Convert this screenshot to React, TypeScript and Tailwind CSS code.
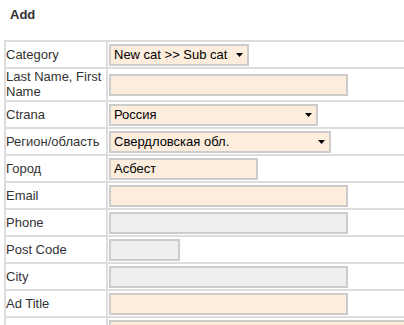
import React from "react";

const Arrow = () => (
  <svg width="7" height="4" viewBox="0 0 7 4" className="shrink-0">
    <path d="M0 0H7L3.5 4Z" fill="#000" />
  </svg>
);

type Field =
  | { label: string; kind: "select"; value: string; w: string }
  | { label: string; kind: "input"; value?: string; w: string; grey?: boolean };

const fields: Field[] = [
  { label: "Category", kind: "select", value: "New cat >> Sub cat", w: "w-[140px]" },
  { label: "Last Name, First Name", kind: "input", w: "w-[239px]" },
  { label: "Ctrana", kind: "select", value: "Россия", w: "w-[209px]" },
  { label: "Регион/область", kind: "select", value: "Свердловская обл.", w: "w-[222px]" },
  { label: "Город", kind: "input", value: "Асбест", w: "w-[149px]" },
  { label: "Email", kind: "input", w: "w-[239px]" },
  { label: "Phone", kind: "input", w: "w-[239px]", grey: true },
  { label: "Post Code", kind: "input", w: "w-[71px]", grey: true },
  { label: "City", kind: "input", w: "w-[239px]", grey: true },
  { label: "Ad Title", kind: "input", w: "w-[239px]" },
  { label: "", kind: "input", w: "w-[400px]" },
];

export default function App() {
  return (
    <div className="w-[404px] h-[325px] overflow-hidden bg-white font-['Liberation_Sans',Arial,sans-serif] text-[13px] text-[#333]">
      <div className="h-[40px] pl-[10px] pt-[7px] font-bold leading-[15px]">Add</div>
      <div className="ml-[4px] w-[600px] border-t-2 border-l-2 border-[#dddddd]">
        {fields.map((f, i) => (
          <div key={i} className="flex border-b-2 border-[#dddddd]">
            <div className="w-[102px] shrink-0 border-r-2 border-[#dddddd] flex items-center min-h-[25px] leading-[15px] [&:has(>span.tall)]:pb-[1px]">
              <span className={f.label.length > 16 ? "tall" : ""}>{f.label}</span>
            </div>
            <div className="flex items-center pl-[1px] min-h-[25px]">
              {f.kind === "select" ? (
                <div
                  className={`${f.w} h-[22px] flex items-center justify-between border-2 border-[#cccccc] bg-[#fdeddd] pl-[3px] pr-[4px] text-black leading-[15px]`}
                >
                  <span>{f.value}</span>
                  <Arrow />
                </div>
              ) : (
                <div
                  className={`${f.w} h-[22px] flex items-center border-2 border-[#cccccc] ${f.grey ? "bg-[#efefef]" : "bg-[#fdeddd]"} pl-[3px] text-black leading-[15px]`}
                >
                  {f.value ?? ""}
                </div>
              )}
            </div>
          </div>
        ))}
      </div>
    </div>
  );
}
